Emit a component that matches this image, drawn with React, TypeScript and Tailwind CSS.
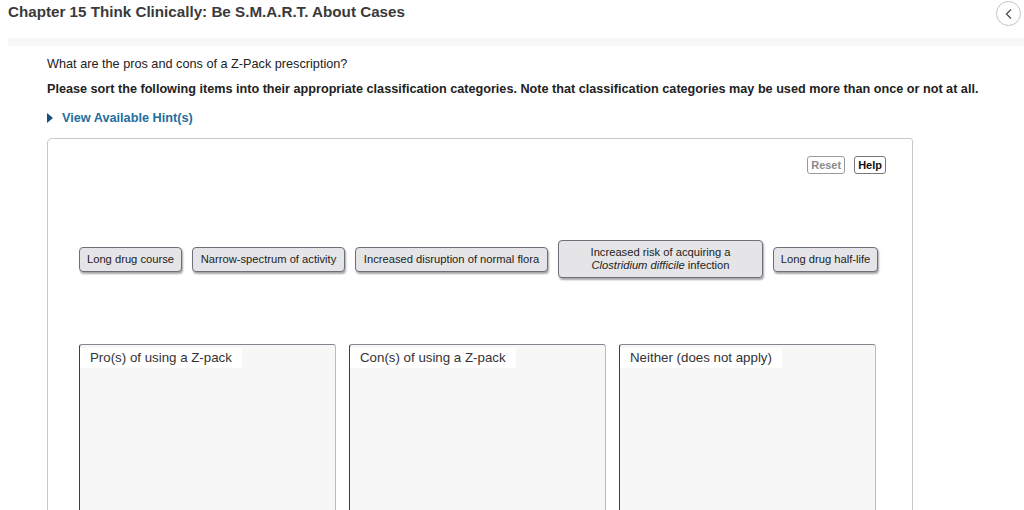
import React from 'react';

const chips = [
  { key: 'course', w: 'w-[103px]', label: <>Long drug course</> },
  { key: 'narrow', w: 'w-[153px]', label: <>Narrow-spectrum of activity</> },
  { key: 'flora', w: 'w-[193px]', label: <>Increased disruption of normal flora</> },
  {
    key: 'cdiff',
    w: 'w-[205px]',
    label: (
      <>
        Increased risk of acquiring a
        <br />
        <i>Clostridium difficile</i> infection
      </>
    ),
  },
  { key: 'halflife', w: 'w-[105px]', label: <>Long drug half-life</> },
];

const categories = ['Pro(s) of using a Z-pack', 'Con(s) of using a Z-pack', 'Neither (does not apply)'];

const Chip = ({ children, w }: { children: React.ReactNode; w: string }) => (
  <div
    className={`${w} bg-[#e5e5e7] border border-[#6f6f7a] rounded-[4px] shadow-[1px_2px_2px_rgba(0,0,0,0.35)] text-[11.2px] leading-[13px] text-[#222] text-center py-[5px]`}
  >
    {children}
  </div>
);

export default function App() {
  return (
    <div className="w-[1024px] h-[510px] overflow-hidden bg-white font-['Liberation_Sans',Arial,sans-serif] text-[#333]">
      {/* Header */}
      <div className="flex items-center justify-between h-[26px] pl-[8px] pr-[3px] pt-[1px]">
        <h1 className="text-[15.2px] font-bold text-[#3a3a3a] mt-[-2px]">Chapter 15 Think Clinically: Be S.M.A.R.T. About Cases</h1>
        <button className="w-[25px] h-[25px] rounded-full border border-[#c4c4c4] flex items-center justify-center text-[#555]">
          <svg width="10" height="12" viewBox="0 0 10 12" fill="none" stroke="currentColor" strokeWidth="1.4">
            <path d="M7 1.5 L2.5 6 L7 10.5" />
          </svg>
        </button>
      </div>
      <div className="ml-[8px] mt-[12px] h-[8px] bg-[#f7f7f7]" />

      {/* Question */}
      <div className="pl-[47px] pt-[11px]">
        <p className="text-[12.7px] leading-[14px] text-[#222]">What are the pros and cons of a Z-Pack prescription?</p>
        <p className="mt-[11px] text-[12.65px] leading-[14px] font-bold text-[#222]">
          Please sort the following items into their appropriate classification categories. Note that classification categories may be used more than once or not at all.
        </p>
        <div className="mt-[15px] flex items-center gap-[9px] text-[12.7px] leading-[14px] font-bold text-[#1f6f9d]">
          <svg width="6" height="10" viewBox="0 0 6 10" className="text-[#1b4f7a]">
            <path d="M0 0 L6 5 L0 10 Z" fill="currentColor" />
          </svg>
          <span>View Available Hint(s)</span>
        </div>

        {/* Sorting panel */}
        <div className="mt-[13px] w-[866px] h-[400px] border border-[#c8c8c8] rounded-tl-[5px] rounded-tr-[3px] px-[31px]">
          <div className="flex justify-end gap-[9px] pt-[17px] mr-[-5px]">
            <button className="border border-[#9a9a9a] rounded-[3px] px-[3px] h-[18px] text-[11px] font-bold text-[#8a8a8a] leading-[16px]">Reset</button>
            <button className="border border-[#777] rounded-[3px] px-[3px] h-[18px] text-[11px] font-bold text-[#111] leading-[16px]">Help</button>
          </div>

          <div className="mt-[66px] flex items-center gap-[10px]">
            {chips.map((c) => (
              <Chip key={c.key} w={c.w}>
                {c.label}
              </Chip>
            ))}
          </div>

          <div className="mt-[66px] flex gap-[13px]">
            {categories.map((label) => (
              <div
                key={label}
                className="w-[257px] h-[220px] bg-[#f7f7f7] border border-[#85858f] border-l-[#3a3a5a] border-r-[#b8b8d2] rounded-t-[3px]"
              >
                <div className="inline-block bg-white pl-[10px] pr-[10px] h-[20px] text-[13.3px] leading-[20px] text-[#333]">{label}</div>
              </div>
            ))}
          </div>
        </div>
      </div>
    </div>
  );
}
